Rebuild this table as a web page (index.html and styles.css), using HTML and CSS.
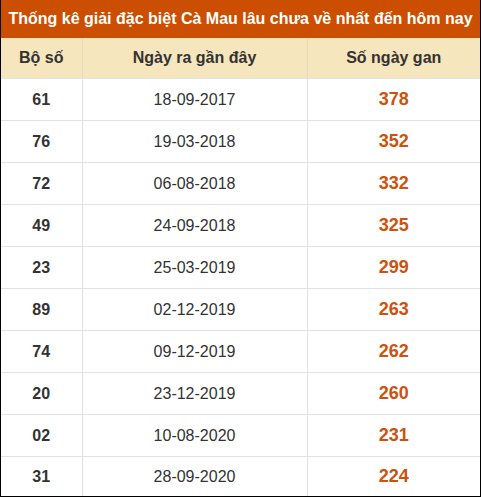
FILE: index.html
```html
<!DOCTYPE html>
<html lang="vi">
<head>
<meta charset="utf-8">
<title>Thống kê giải đặc biệt Cà Mau</title>
<link rel="stylesheet" href="styles.css">
</head>
<body>
<div class="frame">
<table class="stats">
  <colgroup>
    <col class="c1">
    <col class="c2">
    <col class="c3">
  </colgroup>
  <thead>
    <tr><th class="title" colspan="3">Thống kê giải đặc biệt Cà Mau lâu chưa về nhất đến hôm nay</th></tr>
    <tr class="head"><th>Bộ số</th><th>Ngày ra gần đây</th><th>Số ngày gan</th></tr>
  </thead>
  <tbody>
    <tr><td class="num">61</td><td class="date">18-09-2017</td><td class="gan">378</td></tr>
    <tr><td class="num">76</td><td class="date">19-03-2018</td><td class="gan">352</td></tr>
    <tr><td class="num">72</td><td class="date">06-08-2018</td><td class="gan">332</td></tr>
    <tr><td class="num">49</td><td class="date">24-09-2018</td><td class="gan">325</td></tr>
    <tr><td class="num">23</td><td class="date">25-03-2019</td><td class="gan">299</td></tr>
    <tr><td class="num">89</td><td class="date">02-12-2019</td><td class="gan">263</td></tr>
    <tr><td class="num">74</td><td class="date">09-12-2019</td><td class="gan">262</td></tr>
    <tr><td class="num">20</td><td class="date">23-12-2019</td><td class="gan">260</td></tr>
    <tr><td class="num">02</td><td class="date">10-08-2020</td><td class="gan">231</td></tr>
    <tr><td class="num">31</td><td class="date">28-09-2020</td><td class="gan">224</td></tr>
  </tbody>
</table>
</div>
</body>
</html>
```
FILE: styles.css
```css
html, body {
  margin: 0;
  padding: 0;
  background: #fff;
}
body {
  font-family: "Liberation Sans", Arial, sans-serif;
  color: #333;
}
.frame {
  width: 479px;
  border-left: 1px solid #000;
  border-right: 1px solid #000;
  border-bottom: 1px solid #000;
}
.stats {
  width: 479px;
  border-collapse: collapse;
  table-layout: fixed;
}
.c1 { width: 81px; }
.c2 { width: 225px; }
.c3 { width: auto; }
.title {
  background: #cc4e00;
  color: #fff;
  font-size: 16px;
  font-weight: bold;
  white-space: nowrap;
  height: 38px;
  padding: 0;
  text-align: center;
  vertical-align: middle;
}
.head th {
  background: #f6e6bd;
  font-size: 16px;
  font-weight: bold;
  color: #333;
  height: 40px;
  padding: 0;
  border-left: 1px solid #e8dcc0;
  border-bottom: 1px solid #dfe3e8;
}
.head th:first-child { border-left: none; }
tbody td {
  height: 41px;
  padding: 0;
  text-align: center;
  vertical-align: middle;
  border-top: 1px solid #e2e2e2;
  border-left: 1px solid #e2e2e2;
}
tbody tr:first-child td { border-top: none; }
tbody tr:last-child td { height: 39px; }
tbody td:first-child { border-left: none; }
.num {
  font-size: 16px;
  font-weight: bold;
  color: #333;
}
.date {
  font-size: 16px;
  color: #333;
}
.gan {
  font-size: 18px;
  font-weight: bold;
  color: #cc520e;
}
```
